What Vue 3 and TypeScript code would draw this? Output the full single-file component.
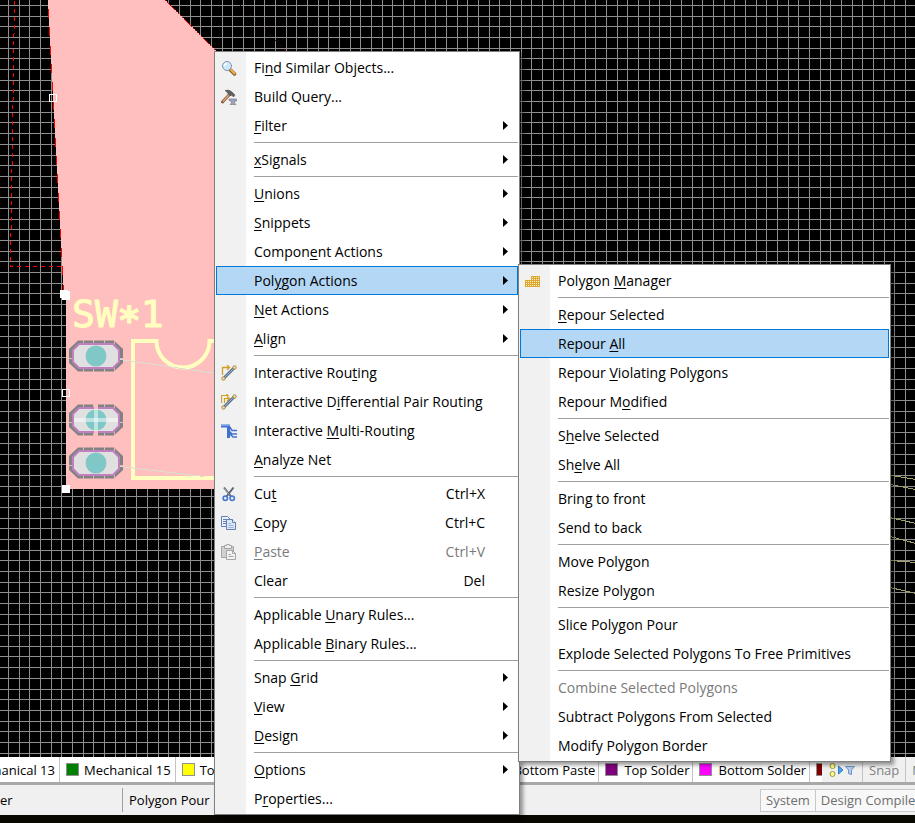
<script setup lang="ts">
interface MenuEntry {
  label: string
  icon?: string
  keys?: string
  sub?: boolean
  disabled?: boolean
  active?: boolean
}

const mainGroups: MenuEntry[][] = [
  [
    { label: 'Fi&nd Similar Objects...', icon: 'find' },
    { label: 'Build Query...', icon: 'build' },
    { label: '&Filter', sub: true },
  ],
  [{ label: '&xSignals', sub: true }],
  [
    { label: '&Unions', sub: true },
    { label: '&Snippets', sub: true },
    { label: 'Compon&ent Actions', sub: true },
    { label: 'Pol&ygon Actions', sub: true, active: true },
    { label: '&Net Actions', sub: true },
    { label: '&Align', sub: true },
  ],
  [
    { label: 'Interactive Rou&ting', icon: 'route' },
    { label: 'Interactive D&ifferential Pair Routing', icon: 'pair' },
    { label: 'Interactive &Multi-Routing', icon: 'multi' },
    { label: '&Analyze Net' },
  ],
  [
    { label: 'Cu&t', icon: 'cut', keys: 'Ctrl+X' },
    { label: '&Copy', icon: 'copy', keys: 'Ctrl+C' },
    { label: '&Paste', icon: 'paste', keys: 'Ctrl+V', disabled: true },
    { label: 'Clear', keys: 'Del' },
  ],
  [{ label: 'Applicable &Unary Rules...' }, { label: 'Applicable &Binary Rules...' }],
  [
    { label: 'Snap &Grid', sub: true },
    { label: '&View', sub: true },
    { label: '&Design', sub: true },
  ],
  [{ label: '&Options', sub: true }, { label: 'P&roperties...' }],
]

const polygonGroups: MenuEntry[][] = [
  [{ label: 'Polygon &Manager', icon: 'polygon' }],
  [
    { label: '&Repour Selected' },
    { label: 'Repour &All', active: true },
    { label: 'Repour &Violating Polygons' },
    { label: 'Repour M&odified' },
  ],
  [{ label: 'S&helve Selected' }, { label: 'Sh&elve All' }],
  [{ label: 'Bring to front' }, { label: 'Send to back' }],
  [{ label: 'Move Polygon' }, { label: 'Resize Polygon' }],
  [{ label: 'Slice Polygon Pour' }, { label: 'Explode Selected Polygons To Free Primitives' }],
  [
    { label: 'Combine Selected Polygons', disabled: true },
    { label: 'Subtract Polygons From Selected' },
    { label: 'Modify Polygon Border' },
  ],
]

const menus = [
  { name: 'main', title: 'Context menu', groups: mainGroups },
  { name: 'polygon', title: 'Polygon Actions', groups: polygonGroups },
]

// Splits "Rou&ting" into the text before, at and after the mnemonic letter.
function parts(label: string): [string, string, string] {
  const at = label.indexOf('&')
  return at < 0 ? [label, '', ''] : [label.slice(0, at), label[at + 1], label.slice(at + 2)]
}

const pitch = 10.68
const columns = Array.from({ length: 240 }, (_, i) => Math.round(8 + i * pitch))
const rows = Array.from({ length: 160 }, (_, i) => Math.round(5 + i * pitch))
const gridPath =
  columns.map((x) => `M${x} 0h1v2000h-1z`).join('') + rows.map((y) => `M0 ${y}h2600v1H0z`).join('')

const pads = [
  { y: 356, cross: false },
  { y: 420, cross: true },
  { y: 463, cross: false },
]

const leftTabs = [
  { label: 'Mechanical 15', color: '#008000' },
  { label: 'To', color: '#ffff00' },
]
const rightTabs = [
  { label: 'Bottom Paste', color: '#800000' },
  { label: 'Top Solder', color: '#800080' },
  { label: 'Bottom Solder', color: '#ff00ff' },
]
</script>

<template>
  <div class="editor">
    <main class="board">
      <svg class="board-art" aria-hidden="true">
        <path :d="gridPath" fill="#8e8e8e" shape-rendering="crispEdges" />
        <g fill="none" stroke="#a3a36b" shape-rendering="crispEdges">
          <path d="M892 475.500L916 479.500M890 484.500L916 489.500M890 517.500L916 523.500M890 536.500L916 543.500M890 560.500L916 562.500M890 587.500L916 593.500" />
        </g>
        <path d="M48 0H165L400 235V489H66V295H64z" fill="#ffbfbf" shape-rendering="crispEdges" />
        <g fill="none" stroke="#f00" shape-rendering="crispEdges">
          <path d="M48 9L64 293" stroke-dasharray="9 9.400" />
          <path d="M14.500 1L10.500 266.500H62" stroke-dasharray="4 4" />
          <path d="M165 0L216 51" stroke-dasharray="2 1" />
          <path d="M235 0L286 51" stroke-dasharray="2 5" stroke="#5a0000" />
        </g>
        <g fill="none" stroke="#ffffc0" stroke-width="4">
          <path d="M216 341H209.500A26.500 26.500 0 0 1 156.500 341H133V478H216" />
        </g>
        <text class="designator" x="72" y="327">SW<tspan class="star" dy="6">*</tspan><tspan dy="-6">1</tspan></text>
        <g v-for="pad in pads" :key="pad.y" :transform="`translate(96 ${pad.y})`">
          <path d="M-18 -15.500H18L27 -7V7L18 15.500H-18L-27 7V-7z" fill="#828282" />
          <path d="M-12.500 -16V16M-2.500 -16V16M8.500 -16V16M18.500 -16V16M-27 2.500H27" stroke="#e2b9b9" />
          <path d="M-17 -12H17L23 -6V6L17 12H-17L-23 6V-6z" fill="#e0e0e0" stroke="#c080c0" stroke-width="2" />
          <circle r="10.500" fill="#80c8c8" />
          <g v-if="pad.cross">
            <path d="M-22 0H22" stroke="#fff" stroke-width="4" opacity=".5" />
            <path d="M0 -11V11" stroke="#fff" stroke-width="4" opacity=".5" />
            <path d="M0 -16V-11M0 11V16" stroke="#ffbfbf" stroke-width="4" />
          </g>
        </g>
        <g fill="none" stroke="#dcdfcf" shape-rendering="crispEdges">
          <path d="M120 359.500L216 373.500M120 466.500L204 476.500" />
        </g>
        <g fill="none" stroke="#fff">
          <rect x="49.500" y="94.500" width="7" height="7" />
          <rect x="62.500" y="389.500" width="7" height="7" />
        </g>
        <path d="M60 290H68V291H70V300H62V298H60zM62 485H70V493H62z" fill="#fff" />
      </svg>
    </main>

    <footer class="bars">
      <nav class="layers">
        <div class="tabs tabs-left">
          <button class="tab tab-cut"><span>Mechanical 13</span></button>
          <button v-for="tab in leftTabs" :key="tab.label" class="tab">
            <i class="swatch" :style="{ background: tab.color }"></i>{{ tab.label }}
          </button>
        </div>
        <div class="tabs tabs-right">
          <button v-for="tab in rightTabs" :key="tab.label" class="tab">
            <i class="swatch" :style="{ background: tab.color }"></i>{{ tab.label }}
          </button>
          <button class="tab tab-sliver" aria-label="Layer"><i class="swatch dark"></i></button>
        </div>
        <div class="tools">
          <button class="tool tool-filter" aria-label="Filter">
            <svg width="28" height="16" viewBox="0 0 28 16">
              <g fill="#ffffa0" stroke="#9a9a28"><circle cx="4.500" cy="4" r="2.500" /><circle cx="4.500" cy="12" r="2.500" /></g>
              <path d="M10.500 4V12L15 8z" fill="#4aa3e8" stroke="#2f7fc4" />
              <path d="M17.500 4.500H26.500L23.500 8V12.500L20.500 11.500V8z" fill="#b5cdec" stroke="#6f93c4" />
            </svg>
          </button>
          <button class="tool tool-snap">Snap</button>
          <button class="tool tool-mask">M</button>
        </div>
      </nav>
      <div class="status">
        <span class="status-left">er</span>
        <span class="status-mode">Polygon Pour</span>
        <div class="panels">
          <button class="panel">System</button>
          <button class="panel panel-last">Design Compiler</button>
        </div>
      </div>
    </footer>

    <nav v-for="menu in menus" :key="menu.name" class="menu" :class="`menu-${menu.name}`" :aria-label="menu.title">
      <ul v-for="(group, g) in menu.groups" :key="g" class="group">
        <li v-for="item in group" :key="item.label">
          <button class="item" :class="{ active: item.active }" :disabled="item.disabled">
            <span class="icon">
              <svg v-if="item.icon" width="16" height="16" viewBox="0 0 16 16" aria-hidden="true">
                <g v-if="item.icon === 'find'">
                  <path d="M9.500 10L13.500 14" stroke="#8a5a20" stroke-width="3.500" stroke-linecap="round" />
                  <path d="M10 10L13.500 13.500" stroke="#f0b050" stroke-width="2" stroke-linecap="round" />
                  <circle cx="6" cy="6" r="4.500" fill="#cfe8fb" stroke="#7f93ad" />
                  <path d="M3.500 6A2.500 2.500 0 0 1 6 3.500" fill="none" stroke="#fff" stroke-width="1.500" />
                </g>
                <g v-else-if="item.icon === 'build'">
                  <path d="M1.500 13L8.500 5.500" stroke="#8b5a3a" stroke-width="3" stroke-linecap="round" />
                  <path d="M2 12.500L8 6" stroke="#e3a878" stroke-width="1.300" />
                  <path d="M4 1.500Q8 0 11 3L14 6L12.500 8L10.500 6L9.500 7L6.500 4Q6 2.500 4 1.500z" fill="#5f6163" stroke="#3f4143" stroke-width=".5" />
                  <path d="M8 10H15.500V12L13.500 12.500V14L15 15.500H9L10.500 14V12.500L8 11.500z" fill="#a3a3b8" stroke="#74748a" stroke-width=".6" />
                </g>
                <g v-else-if="item.icon === 'route' || item.icon === 'pair'" fill="none">
                  <path v-if="item.icon === 'route'" d="M1.500 10V2.500H8M6 0L8.500 2.500L6 5" stroke="#d2a020" stroke-width="1.300" />
                  <path v-else d="M.500 9V1.500H7M3.500 9V4.500H8M5.500 0L7.500 2M6 2.500L8.500 4.500L6 7" stroke="#d2a020" stroke-width="1.200" />
                  <path d="M3 13L13 3" stroke="#59708f" stroke-width="3" />
                  <path d="M3 13L13 3" stroke="#a3b5cc" />
                  <g fill="#f2dfb4" stroke="#a8853b"><circle cx="13.500" cy="2.500" r="1.700" /><circle cx="2.500" cy="13.500" r="1.700" /></g>
                </g>
                <g v-else-if="item.icon === 'multi'" fill="none" stroke="#4470d2">
                  <path d="M0 3H9M7.500 3V15" stroke-width="3" />
                  <path d="M8 3L11 7.500H16M8 8L11 11H16M8 10L12 14H16" stroke-width="1.600" />
                  <path d="M0 2.500H9" stroke="#78a0f0" />
                </g>
                <g v-else-if="item.icon === 'cut'" fill="none">
                  <path d="M3 1.500L10 10.500M12.500 1.500L5.500 10.500" stroke="#5c636c" stroke-width="2" />
                  <path d="M3.500 2.500L8 8.500" stroke="#b9c0c8" stroke-width=".8" />
                  <g stroke="#4a78c8" stroke-width="1.600" fill="#e5efff"><circle cx="4.300" cy="12.300" r="2.200" /><circle cx="11.200" cy="12.300" r="2.200" /></g>
                </g>
                <g v-else-if="item.icon === 'copy'" stroke="#647fb3">
                  <path d="M.500 1.500H6.500L9.500 4.500V11.500H.500z" fill="#e9f1fc" />
                  <path d="M2 4.500H6M2 6.500H6M2 8.500H6" />
                  <path d="M5.500 4.500H11.500L14.500 7.500V14.500H5.500z" fill="#d8e7fa" />
                  <path d="M11.500 4.500V7.500H14.500" fill="#fff" />
                  <path d="M7.500 8.500H10M7.500 10.500H12.500M7.500 12.500H12.500" stroke="#9db4d8" />
                </g>
                <g v-else-if="item.icon === 'paste'" stroke="#a5a5a5">
                  <path d="M.500 2.500H12.500V13.500H.500z" fill="#d0d0d0" />
                  <path d="M3.500 1.500H5.500V.500H8.500V1.500H10.500V4.500H3.500z" fill="#eee" />
                  <path d="M5.500 6.500H11.500L14.500 9.500V15.500H5.500z" fill="#f2f2f2" />
                  <path d="M11.500 6.500V9.500H14.500M7.500 10.500H10M7.500 12.500H12.500" fill="none" />
                </g>
                <g v-else shape-rendering="crispEdges">
                  <path d="M0 7H6V3H15V14H0z" fill="#dca832" />
                  <path d="M7 4.500H15M7 6.500H15M1 8.500H15M1 10.500H15M1 12.500H15" stroke="#fff0c4" stroke-dasharray="1 1" />
                </g>
              </svg>
            </span>
            <span class="label">{{ parts(item.label)[0] }}<u>{{ parts(item.label)[1] }}</u>{{ parts(item.label)[2] }}</span>
            <kbd v-if="item.keys" class="keys">{{ item.keys }}</kbd>
            <svg v-if="item.sub" class="arrow" width="5" height="9" viewBox="0 0 5 9" aria-hidden="true">
              <path d="M0 0L5 4.500L0 9z" fill="#000" />
            </svg>
          </button>
        </li>
      </ul>
    </nav>
  </div>
</template>

<style>
body {
  background: #080800;
}
</style>

<style scoped>
.editor {
  position: relative;
  display: flex;
  flex-direction: column;
  min-height: 100vh;
  overflow: hidden;
  box-sizing: border-box;
  padding-bottom: 8px;
  background: #080800;
  color: #000;
  font: 14px/20px "Open Sans", "Noto Sans", sans-serif;
}
button {
  margin: 0;
  padding: 0;
  border: 0;
  background: none;
  color: inherit;
  font: inherit;
  text-align: left;
  white-space: nowrap;
}
.board {
  position: relative;
  flex: 1;
  background: #000;
}
.board-art {
  position: absolute;
  width: 100%;
  height: 100%;
}
.designator {
  font: 38px "DejaVu Sans Mono", monospace;
  fill: #ffffc0;
  stroke: #ffffc0;
  stroke-width: 1px;
}
.star {
  font-weight: bold;
}
.bars {
  background: #f0f0f0;
  font-size: 13px;
}
.layers {
  display: flex;
  height: 25px;
  border-bottom: 3px solid #a8a8a8;
  background: #fff;
}
.tabs {
  display: flex;
}
.tabs-left {
  flex: 1;
  min-width: 0;
  overflow: hidden;
}
.tab {
  display: flex;
  flex: none;
  align-items: center;
  gap: 5px;
  padding: 0 4px 0 6px;
  border-right: 1px solid #c4c4c4;
}
.tabs-right .tab {
  gap: 6px;
  padding-right: 3px;
}
.tab-cut {
  justify-content: flex-end;
  width: 60px;
  box-sizing: border-box;
  overflow: hidden;
}
.tabs-right .tab-sliver {
  box-sizing: border-box;
  width: 12px;
  padding-right: 0;
  border-right: 0;
  overflow: hidden;
}
.swatch {
  flex: none;
  box-sizing: border-box;
  width: 13px;
  height: 13px;
  border: 1px solid #909090;
}
.dark {
  background: #800000;
}
.tools {
  display: flex;
  width: 93px;
  overflow: hidden;
  background: #f0f0f0;
  color: #808080;
}
.tool {
  display: flex;
  flex: none;
  align-items: center;
  border-right: 1px solid #c4c4c4;
  padding: 0 6px;
}
.tool-filter {
  width: 41px;
  box-sizing: border-box;
}
.status {
  display: flex;
  align-items: center;
  height: 30px;
}
.status-left {
  width: 122px;
  border-right: 1px solid #a0a0a0;
  line-height: 24px;
}
.status-mode {
  flex: 1;
  padding-left: 6px;
}
.panels {
  display: flex;
  width: 155px;
  overflow: hidden;
  color: #6e6e6e;
}
.panel {
  flex: none;
  box-sizing: border-box;
  height: 23px;
  padding: 0 5px;
  border: 1px solid #c8c8c8;
  background: #f8f8f8;
}
.panel-last {
  border-left: 0;
}
.menu {
  position: absolute;
  box-sizing: border-box;
  padding: 1px;
  border: 1px solid #808080;
  background: linear-gradient(90deg, #f1f1f1 31px, #fff 31px);
  box-shadow: 3px 3px 4px rgba(0, 0, 0, 0.4);
}
.menu-main {
  left: 214px;
  top: 51px;
  width: 306px;
}
.menu-polygon {
  left: 518px;
  top: 264px;
  width: 373px;
}
.group {
  margin: 0;
  padding: 0;
  list-style: none;
}
.group + .group::before {
  content: "";
  display: block;
  height: 1px;
  margin: 2px 0 2px 38px;
  background: #a0a0a0;
}
.item {
  display: flex;
  align-items: center;
  box-sizing: border-box;
  width: 100%;
  height: 29px;
  padding-right: 9px;
  border: 1px solid transparent;
}
.item.active {
  border-color: #0078d7;
  background: #b3d7f5;
}
.item:disabled {
  color: #7a7a7a;
}
.icon {
  display: flex;
  width: 37px;
  padding-left: 4px;
  box-sizing: border-box;
}
.label {
  flex: 1;
}
u {
  text-underline-offset: 2px;
}
.keys {
  margin-right: 23px;
  font: inherit;
}
</style>
